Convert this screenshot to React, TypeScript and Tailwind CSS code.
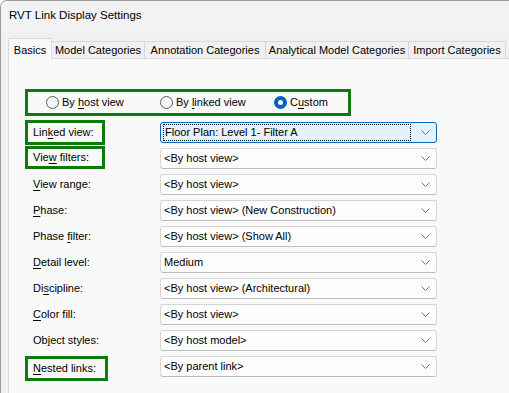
import React from 'react';

const GREEN = 'border-[3px] border-[#0b7b0b]';

const Chevron = () => (
  <svg width="9" height="5" viewBox="0 0 9 5" className="shrink-0">
    <path d="M0.5 0.5 L4.5 4.5 L8.5 0.5" fill="none" stroke="#707070" strokeWidth="1" />
  </svg>
);

const Ul: React.FC<{ pre: string; key_: string; post: string }> = ({ pre, key_, post }) => (
  <span>
    {pre}
    <span className="underline underline-offset-2">{key_}</span>
    {post}
  </span>
);

type Row = { pre: string; k: string; post: string; value: string; box?: string; focused?: boolean };

const ROWS: Row[] = [
  { pre: 'Lin', k: 'k', post: 'ed view:', value: 'Floor Plan: Level 1- Filter A', box: 'w-[80px] h-[25px] mt-[1px]', focused: true },
  { pre: 'Vie', k: 'w', post: ' filters:', value: '<By host view>', box: 'w-[80px] h-[23px] mt-[1px]' },
  { pre: '', k: 'V', post: 'iew range:', value: '<By host view>' },
  { pre: '', k: 'P', post: 'hase:', value: '<By host view> (New Construction)' },
  { pre: 'Phase ', k: 'f', post: 'ilter:', value: '<By host view> (Show All)' },
  { pre: '', k: 'D', post: 'etail level:', value: 'Medium' },
  { pre: 'Di', k: 's', post: 'cipline:', value: '<By host view> (Architectural)' },
  { pre: '', k: 'C', post: 'olor fill:', value: '<By host view>' },
  { pre: 'Ob', k: 'j', post: 'ect styles:', value: '<By host model>' },
  { pre: '', k: 'N', post: 'ested links:', value: '<By parent link>', box: 'w-[83px] h-[25px] mt-[3px]' },
];

const TABS = [
  { label: 'Model Categories', w: 'w-[93px]' },
  { label: 'Annotation Categories', w: 'w-[121px]' },
  { label: 'Analytical Model Categories', w: 'w-[143px]' },
  { label: 'Import Categories', w: 'w-[97px]' },
];

const Radio: React.FC<{ checked?: boolean }> = ({ checked }) =>
  checked ? (
    <span className="w-[13px] h-[13px] rounded-full bg-[#0063b8] flex items-center justify-center shrink-0">
      <span className="w-[5px] h-[5px] rounded-full bg-white" />
    </span>
  ) : (
    <span className="w-[13px] h-[13px] rounded-full border border-[#5c5c5c] bg-[#f5f5f5] shrink-0" />
  );

export default function App() {
  return (
    <div
      className="w-[509px] h-[393px] overflow-hidden bg-[#f0f0f0] border-l border-t border-[#9b9b9b] rounded-tl-[7px] flex flex-col text-[11px] text-black"
      style={{ fontFamily: '"Liberation Sans", Arial, sans-serif' }}
    >
      {/* title bar */}
      <div className="h-[30px] bg-[#f3f3f3] flex items-center pl-[8px] text-[11.5px] shrink-0">
        RVT Link Display Settings
      </div>

      {/* tabs */}
      <div className="h-[27px] flex items-end pl-[7px] shrink-0">
        <div className="w-[44px] h-[21px] -mb-px relative z-10 bg-[#f9f9f9] border-l border-t border-r border-[#d9d9d9] flex items-start justify-center pt-[3px]">
          Basics
        </div>
        {TABS.map(t => (
          <div
            key={t.label}
            className={`${t.w} h-[17px] border-t border-r border-[#d9d9d9] flex items-center justify-center whitespace-nowrap`}
          >
            {t.label}
          </div>
        ))}
      </div>

      {/* panel */}
      <div className="flex-1 ml-[7px] border-l border-t border-[#d9d9d9] bg-[#f9f9f9] pl-[16px] pt-[30px]">
        <div className={`${GREEN} w-[326px] h-[27px] flex items-center pl-[18px]`}>
          <div className="w-[114px] flex items-center gap-[3px]">
            <Radio />
            <Ul pre="By " key_="h" post="ost view" />
          </div>
          <div className="w-[114px] flex items-center gap-[3px]">
            <Radio />
            <Ul pre="By " key_="l" post="inked view" />
          </div>
          <div className="flex items-center gap-[3px]">
            <Radio checked />
            <Ul pre="C" key_="u" post="stom" />
          </div>
        </div>

        <div className="mt-[3px] flex flex-col">
          {ROWS.map((r, i) => (
            <div key={i} className="h-[26px] flex">
              <div className="w-[135px] shrink-0 flex items-start">
                {r.box ? (
                  <div className={`${GREEN} ${r.box} flex items-center pl-[5px]`}>
                    <Ul pre={r.pre} key_={r.k} post={r.post} />
                  </div>
                ) : (
                  <div className="h-[26px] flex items-center pl-[8px]">
                    <Ul pre={r.pre} key_={r.k} post={r.post} />
                  </div>
                )}
              </div>
              <div className="flex items-center">
                {r.focused ? (
                  <div className="w-[277px] h-[21px] rounded-[3px] border border-[#0067c0] bg-[#e5f1fb] flex items-center pl-[2px] pr-[6px]">
                    <div className="flex-1 h-[17px] border border-dotted border-black flex items-center pl-[1px] mr-[10px]">
                      {r.value}
                    </div>
                    <Chevron />
                  </div>
                ) : (
                  <div className="w-[277px] h-[21px] rounded-[3px] border border-[#d6d6d6] border-b-[#bdbdbd] bg-[#fdfdfd] flex items-center pl-[3px] pr-[6px]">
                    <span className="flex-1 whitespace-nowrap">{r.value}</span>
                    <Chevron />
                  </div>
                )}
              </div>
            </div>
          ))}
        </div>
      </div>
    </div>
  );
}
